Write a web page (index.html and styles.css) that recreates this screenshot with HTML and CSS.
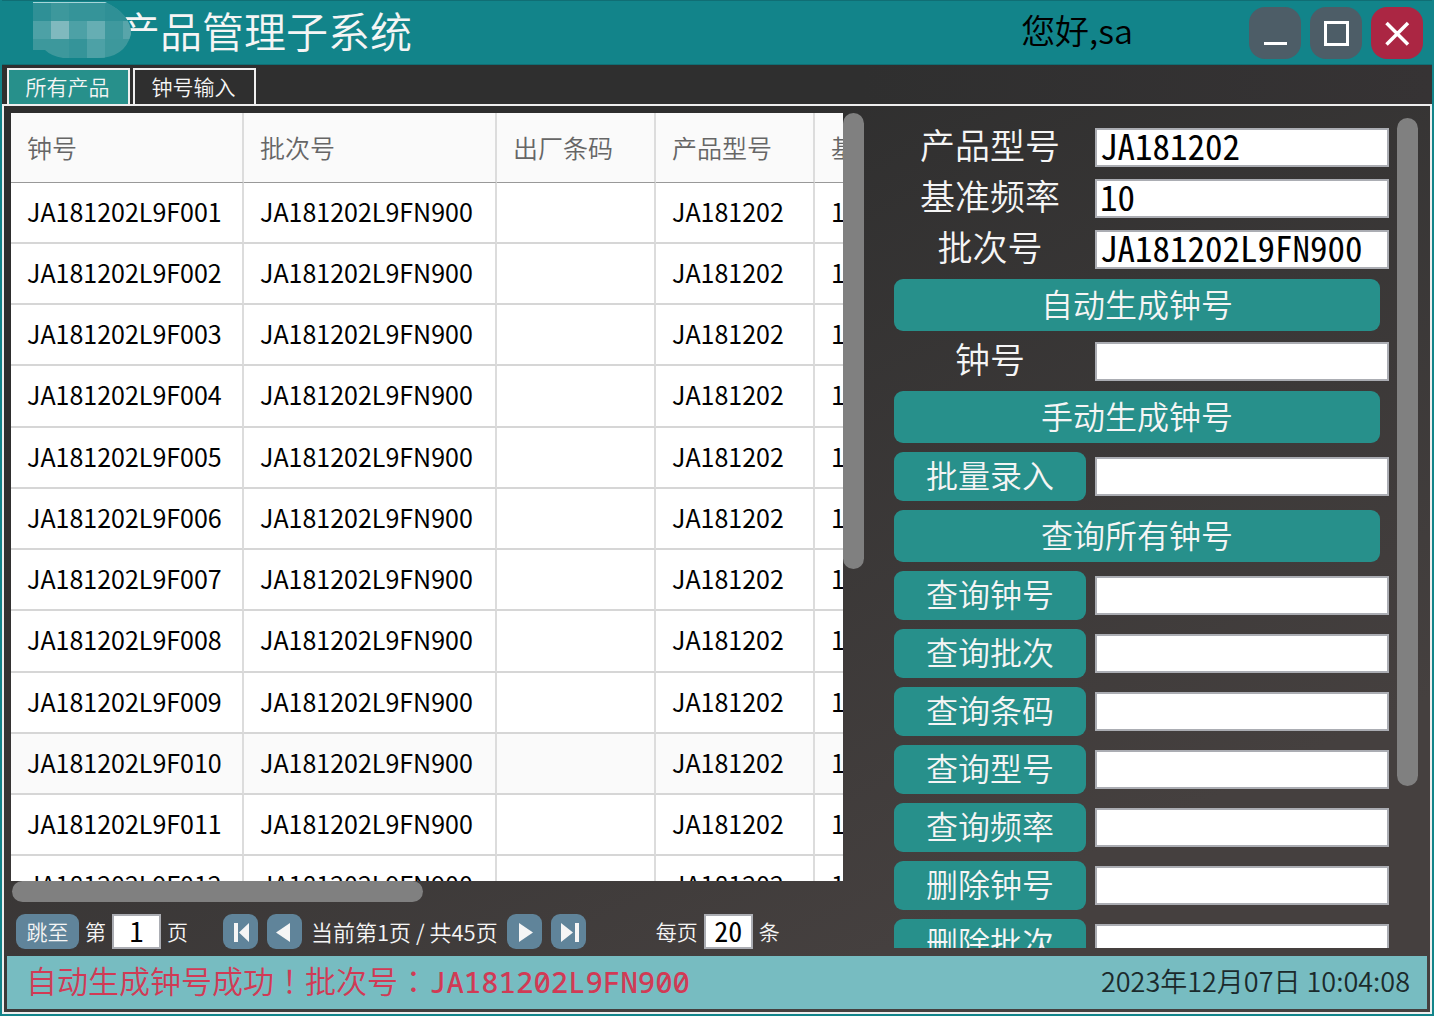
FILE: index.html
```
<!DOCTYPE html>
<html lang="zh-CN">
<head>
<meta charset="utf-8">
<title>产品管理子系统</title>
<link rel="stylesheet" href="styles.css">
</head>
<body>
<div class="window">
  <header class="titlebar">
    <svg class="logo" viewBox="0 0 98 56" aria-hidden="true">
      <defs><clipPath id="logo-shape"><path d="M0 0H72Q98 12 98 32Q92 56 64 56H30Q18 54 12 48H0Z"/></clipPath></defs>
      <path fill="#12848a" d="M84 31h14v25H84z"/>
      <g clip-path="url(#logo-shape)">
        <path fill="#3d989c" d="M0 0h98v56H0z"/>
        <path fill="#2f9096" d="M0 0h18v19H0zM72 0h26v19H72z"/>
        <path fill="#359499" d="M36 0h36v19H36zM36 37h18v19H36z"/>
        <path fill="#4da1a6" d="M0 19h18v18H0zM36 19h18v18H36zM54 37h18v19H54z"/>
        <path fill="#80b9be" d="M18 19h18v18H18z"/>
        <path fill="#66aeb3" d="M54 19h18v18H54z"/>
        <path fill="#3f999e" d="M72 19h18v18H72z"/>
        <path fill="#58a5aa" d="M90 19h8v18h-8z"/>
        <path fill="#a5d5d8" d="M0 0h74v1H0z"/>
      </g>
    </svg>
    <h1 class="title">产品管理子系统</h1>
    <p class="greeting">您好,sa</p>
    <div class="window-buttons">
      <button class="window-button" type="button" aria-label="最小化"><svg viewBox="0 0 52 52"><path d="M15 36.500h23" stroke-width="3"/></svg></button>
      <button class="window-button" type="button" aria-label="最大化"><svg viewBox="0 0 52 52"><path d="M15.500 15.500h22v22h-22z" stroke-width="3"/></svg></button>
      <button class="window-button window-button--close" type="button" aria-label="关闭"><svg viewBox="0 0 52 52"><path d="M15.500 16L37 37.500M37 16L15.500 37.500" stroke-width="3.500"/></svg></button>
    </div>
  </header>

  <nav class="tabs">
    <button class="tab tab--active" type="button">所有产品</button>
    <button class="tab" type="button">钟号输入</button>
  </nav>

  <main class="panel">
    <div class="content">
      <section class="list">
        <div class="table-area">
          <div class="table-view">
            <table class="products">
              <colgroup><col class="col-clock"><col class="col-batch"><col class="col-barcode"><col class="col-model"><col class="col-base"></colgroup>
              <thead><tr><th>钟号</th><th>批次号</th><th>出厂条码</th><th>产品型号</th><th>基准频率</th></tr></thead>
              <tbody>
                <tr><td>JA181202L9F001</td><td>JA181202L9FN900</td><td></td><td>JA181202</td><td>10</td></tr>
                <tr><td>JA181202L9F002</td><td>JA181202L9FN900</td><td></td><td>JA181202</td><td>10</td></tr>
                <tr><td>JA181202L9F003</td><td>JA181202L9FN900</td><td></td><td>JA181202</td><td>10</td></tr>
                <tr><td>JA181202L9F004</td><td>JA181202L9FN900</td><td></td><td>JA181202</td><td>10</td></tr>
                <tr><td>JA181202L9F005</td><td>JA181202L9FN900</td><td></td><td>JA181202</td><td>10</td></tr>
                <tr><td>JA181202L9F006</td><td>JA181202L9FN900</td><td></td><td>JA181202</td><td>10</td></tr>
                <tr><td>JA181202L9F007</td><td>JA181202L9FN900</td><td></td><td>JA181202</td><td>10</td></tr>
                <tr><td>JA181202L9F008</td><td>JA181202L9FN900</td><td></td><td>JA181202</td><td>10</td></tr>
                <tr><td>JA181202L9F009</td><td>JA181202L9FN900</td><td></td><td>JA181202</td><td>10</td></tr>
                <tr class="is-hovered"><td>JA181202L9F010</td><td>JA181202L9FN900</td><td></td><td>JA181202</td><td>10</td></tr>
                <tr><td>JA181202L9F011</td><td>JA181202L9FN900</td><td></td><td>JA181202</td><td>10</td></tr>
                <tr><td>JA181202L9F012</td><td>JA181202L9FN900</td><td></td><td>JA181202</td><td>10</td></tr>
              </tbody>
            </table>
          </div>
          <div class="scroll"><div class="thumb thumb--table-v"></div></div>
          <div class="scroll"><div class="thumb thumb--table-h"></div></div>
        </div>
        <div class="pager">
          <div class="pager-group">
            <button class="pager-button pager-button--jump" type="button">跳至</button>
            <label for="page">第</label>
            <input class="pager-input" id="page" type="text" value="1">
            <span>页</span>
          </div>
          <div class="pager-group pager-group--nav">
            <button class="pager-button" type="button" aria-label="首页"><svg viewBox="0 0 35 35"><path d="M11 9h4v19h-4zM26 9v19l-10-9.500z"/></svg></button>
            <button class="pager-button" type="button" aria-label="上一页"><svg viewBox="0 0 35 35"><path d="M23 9v19L9 18.500z"/></svg></button>
            <span class="pager-position">当前第1页 / 共45页</span>
            <button class="pager-button" type="button" aria-label="下一页"><svg viewBox="0 0 35 35"><path d="M12 9v19l14-9.500z"/></svg></button>
            <button class="pager-button" type="button" aria-label="末页"><svg viewBox="0 0 35 35"><path d="M10 9v19l12-9.500zM24 9h4v19h-4z"/></svg></button>
          </div>
          <div class="pager-group">
            <label for="page-size">每页</label>
            <input class="pager-input" id="page-size" type="text" value="20">
            <span>条</span>
          </div>
        </div>
      </section>

      <form class="form">
        <div class="form-view">
          <div class="field"><label for="model">产品型号</label><input id="model" type="text" value="JA181202"></div>
          <div class="field"><label for="base">基准频率</label><input id="base" type="text" value="10"></div>
          <div class="field"><label for="batch">批次号</label><input id="batch" type="text" value="JA181202L9FN900"></div>
          <button class="action action--wide" type="button">自动生成钟号</button>
          <div class="field"><label for="clock">钟号</label><input id="clock" type="text"></div>
          <button class="action action--wide" type="button">手动生成钟号</button>
          <div class="field field--action"><button class="action" type="button">批量录入</button><input type="text" aria-label="批量录入"></div>
          <button class="action action--wide" type="button">查询所有钟号</button>
          <div class="field field--action"><button class="action" type="button">查询钟号</button><input type="text" aria-label="查询钟号"></div>
          <div class="field field--action"><button class="action" type="button">查询批次</button><input type="text" aria-label="查询批次"></div>
          <div class="field field--action"><button class="action" type="button">查询条码</button><input type="text" aria-label="查询条码"></div>
          <div class="field field--action"><button class="action" type="button">查询型号</button><input type="text" aria-label="查询型号"></div>
          <div class="field field--action"><button class="action" type="button">查询频率</button><input type="text" aria-label="查询频率"></div>
          <div class="field field--action"><button class="action" type="button">删除钟号</button><input type="text" aria-label="删除钟号"></div>
          <div class="field field--action"><button class="action" type="button">删除批次</button><input type="text" aria-label="删除批次"></div>
        </div>
        <div class="scroll scroll--form"><div class="thumb thumb--form"></div></div>
      </form>
    </div>

    <footer class="status">
      <p class="message">自动生成钟号成功<span class="mark" lang="zh-TW">！</span>批次号<span class="mark" lang="zh-TW">：</span><span class="code">JA181202L9FN900</span></p>
      <time class="clock" datetime="2023-12-07T10:04:08">2023年12月07日 10:04:08</time>
    </footer>
  </main>
</div>
</body>
</html>
```
FILE: styles.css
```
* {
  box-sizing: border-box;
}

body {
  margin: 0;
  font-family: "Noto Sans CJK SC", sans-serif;
  font-weight: 350;
  color: #f5f5f5;
}

button,
input {
  font: inherit;
  color: inherit;
  margin: 0;
  padding: 0;
  border: 0;
}

h1,
p {
  margin: 0;
  font-weight: inherit;
}

.window {
  display: flex;
  flex-direction: column;
  height: 100vh;
  overflow: hidden;
  padding: 0 2px 2px;
  background: #12848a;
}

/* Title bar */
.titlebar {
  flex: none;
  display: flex;
  align-items: center;
  height: 65px;
  padding: 0 9px 0 31px;
  border-bottom: 1px solid #106e74;
  box-shadow: inset 0 2px 0 -1px #106e74;
}

/* The logo lies over the start of the title */
.logo {
  z-index: 1;
  width: 98px;
  height: 56px;
  margin-bottom: 4px;
}

.title {
  margin-left: -13px;
  padding-bottom: 4px;
  font-size: 42px;
  line-height: 60px;
  white-space: nowrap;
}

.greeting {
  margin-left: auto;
  padding: 0 116px 4px 0;
  font-size: 34px;
  line-height: 60px;
  color: #000;
}

.window-buttons {
  display: flex;
  gap: 9px;
  padding-top: 2px;
}

.window-button {
  width: 52px;
  height: 52px;
  border-radius: 16px;
  background: #4d5d67;
}

.window-button--close {
  background: #ab2643;
}

.window-button svg {
  display: block;
  fill: none;
  stroke: #fff;
}

/* Tabs */
.tabs {
  flex: none;
  display: flex;
  gap: 3px;
  height: 39px;
  padding: 3px 5px 0;
  background: linear-gradient(90deg, #2f2f2f 60%, #363334);
}

.tab {
  width: 123px;
  padding: 0 2px 2px 0;
  border: 2px solid #f0f0f0;
  border-bottom: 0;
  background: transparent;
  font-size: 21px;
}

.tab--active {
  background: #27908b;
}

/* Main panel */
.panel {
  flex: 1;
  min-height: 0;
  display: flex;
  flex-direction: column;
  padding: 7px 3px 3px;
  border: 2px solid #eee;
  background: linear-gradient(155deg, #2e2e2e 20%, #45403f 80%);
}

.content {
  flex: 1;
  min-height: 0;
  display: grid;
  grid-template-columns: minmax(0, 1fr) 533px;
  gap: 30px;
  padding-left: 4px;
}

.list {
  display: flex;
  flex-direction: column;
  min-height: 0;
}

.table-area {
  flex: 1;
  min-height: 0;
  display: grid;
  grid-template-columns: minmax(0, 1fr) 21px;
  grid-template-rows: minmax(0, 1fr) 21px;
}

.table-view {
  overflow: hidden;
  background: #fff;
}

.products {
  width: 1100px;
  table-layout: fixed;
  border-collapse: separate;
  border-spacing: 0;
  color: #000;
  font-size: 25px;
  font-weight: 400;
}

.col-clock { width: 233px; }
.col-batch { width: 253px; }
.col-barcode { width: 159px; }
.col-model { width: 159px; }

.products th,
.products td {
  padding: 0 16px 2px;
  text-align: left;
  white-space: nowrap;
  border-right: 2px solid #dcdcdc;
  border-bottom: 2px solid #d6d6d6;
}

.products th {
  height: 70px;
  background: #fafafa;
  border-bottom: 1px solid #999;
  color: #666;
  font-weight: 350;
}

.products td {
  height: 61px;
  padding-bottom: 4px;
}

.products tr:nth-child(4n) td {
  height: 62px;
}

.is-hovered {
  background: #fafafa;
}

.thumb {
  border-radius: 11px;
  background: #808080;
}

.thumb--table-v {
  height: 456px;
}

.thumb--table-h {
  width: 411px;
  height: 21px;
  margin-left: 1px;
}

/* Pager */
.pager {
  display: flex;
  align-items: center;
  padding: 12px 5px 7px;
  font-size: 21px;
}

.pager-group {
  display: flex;
  align-items: center;
  gap: 6px;
  white-space: nowrap;
}

.pager-group--nav {
  gap: 9px;
  margin: 0 70px 0 35px;
}

.pager-group label,
.pager-group span {
  padding-bottom: 2px;
}

.pager-button {
  width: 35px;
  height: 35px;
  border-radius: 9px;
  background: #60849a;
}

.pager-button--jump {
  width: 63px;
  padding-bottom: 2px;
}

.pager-button svg {
  display: block;
  fill: #f5f5f5;
}

.pager-position {
  min-width: 184px;
  font-size: 22px;
  text-align: center;
}

.pager-input {
  width: 49px;
  height: 35px;
  border: 2px solid #abadb3;
  background: #fff;
  color: #000;
  text-align: center;
  font-family: "Noto Sans Mono CJK SC", "Noto Sans CJK SC", sans-serif;
  font-size: 28px;
  line-height: 28px;
  padding-bottom: 3px;
}

/* Form */
.form {
  display: grid;
  grid-template-columns: minmax(0, 1fr) 21px;
  gap: 8px;
  min-height: 0;
  padding: 0 9px 8px 0;
}

.form-view {
  display: flex;
  flex-direction: column;
  gap: 9px;
  min-height: 0;
  overflow: hidden;
  padding-top: 13px;
}

.field {
  flex: none;
  display: grid;
  grid-template-columns: 192px minmax(0, 1fr);
  align-items: center;
  gap: 9px;
  height: 42px;
}

.field--action {
  height: 49px;
}

.field label {
  padding-bottom: 7px;
  font-size: 35px;
  line-height: 35px;
  text-align: center;
}

.field input {
  height: 39px;
  padding: 0 3px 5px;
  border: 2px solid #abadb3;
  background: #fff;
  color: #000;
  font-family: "Noto Sans Mono CJK SC", "Noto Sans CJK SC", sans-serif;
  font-size: 35px;
  line-height: 30px;
}

.action {
  flex: none;
  height: 49px;
  padding-bottom: 4px;
  border-radius: 9px;
  background: #27908b;
  font-size: 32px;
  line-height: 45px;
}

.action--wide {
  height: 52px;
  margin-right: 9px;
}

.scroll--form {
  padding-top: 5px;
}

.thumb--form {
  height: 668px;
}

/* Status bar */
.status {
  flex: none;
  display: flex;
  align-items: center;
  justify-content: space-between;
  height: 53px;
  padding: 0 17px 3px 19px;
  background: #77bcc1;
  white-space: nowrap;
}

.message {
  color: #d13a55;
  font-size: 31px;
  line-height: 48px;
}

.mark {
  font-family: "Noto Sans CJK TC", sans-serif;
}

.code {
  font-family: "Noto Sans Mono", "DejaVu Sans Mono", monospace;
  font-size: 29px;
  font-weight: 500;
}

.clock {
  padding-bottom: 2px;
  color: #1b2a2c;
  font-size: 27px;
}
```
